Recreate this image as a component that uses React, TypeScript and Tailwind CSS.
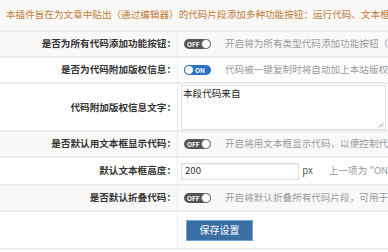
import React from 'react';

const Toggle = ({ on }: { on?: boolean }) =>
  on ? (
    <span className="relative inline-flex items-center w-[27px] h-[10px] rounded-full bg-[#2a72c4] shrink-0">
      <span className="absolute left-0 top-[-0.5px] w-[10px] h-[10px] rounded-full bg-white border border-[#2a72c4]" />
      <span className="ml-[11px] text-[6.5px] font-bold leading-none text-white">ON</span>
    </span>
  ) : (
    <span className="relative inline-flex items-center w-[27px] h-[10px] rounded-full bg-[#555] shrink-0">
      <span className="ml-[3px] text-[6.5px] font-bold leading-none text-white">OFF</span>
      <span className="absolute right-0 top-[-0.5px] w-[10px] h-[10px] rounded-full bg-white border border-[#777]" />
    </span>
  );

const Row = ({
  label,
  gray,
  h,
  children,
}: {
  label: string;
  gray?: boolean;
  h: string;
  children: React.ReactNode;
}) => (
  <div className={`grid grid-cols-[178px_1fr] border-b-2 border-[#ececec] ${gray ? 'bg-[#f9f9f9]' : 'bg-white'} ${h}`}>
    <div className="flex items-center justify-end pr-[1px] border-r border-[#ececec] font-bold text-[#333]">
      {label}
    </div>
    <div className="flex items-center pl-[6px] gap-[14px] overflow-hidden whitespace-nowrap">{children}</div>
  </div>
);

export default function App() {
  return (
    <div
      className="w-[388px] h-[252px] overflow-hidden bg-white text-[9.6px] leading-none [text-spacing-trim:space-all]"
      style={{ fontFamily: '"Noto Sans CJK SC", "Noto Sans", sans-serif' }}
    >
      <div className="h-[32px] flex items-center pl-[6px] bg-[#f9f9f9] border-b-2 border-[#ececec] text-[#c27a33] whitespace-nowrap overflow-hidden">
        本插件旨在为文章中贴出（通过编辑器）的代码片段添加多种功能按钮：运行代码、文本框
      </div>

      <Row label="是否为所有代码添加功能按钮：" gray h="h-[26px]">
        <Toggle />
        <span className="text-[#999]">开启将为所有类型代码添加功能按钮（注：非</span>
      </Row>

      <Row label="是否为代码附加版权信息：" h="h-[26px]">
        <Toggle on />
        <span className="text-[#999]">代码被一键复制时将自动加上本站版权信息</span>
      </Row>

      <div className="grid grid-cols-[178px_1fr] border-b-2 border-[#ececec] bg-white h-[48px]">
        <div className="flex items-center justify-end pr-[1px] border-r border-[#ececec] font-bold text-[#333]">
          代码附加版权信息文字：
        </div>
        <div className="pl-[3px] pr-[2px] py-[1px]">
          <div className="relative h-[45px] border border-[#ddd] px-[1px] pt-[3px] text-[#222]">
            本段代码来自
            <svg className="absolute right-[1px] bottom-[1px]" width="6" height="6" viewBox="0 0 6 6">
              <path d="M5.5 0.5 L0.5 5.5 M5.5 3 L3 5.5" stroke="#999" strokeWidth="0.8" />
            </svg>
          </div>
        </div>
      </div>

      <Row label="是否默认用文本框显示代码：" gray h="h-[26px]">
        <Toggle />
        <span className="text-[#999]">开启将用文本框显示代码，以便控制代码颜色</span>
      </Row>

      <div className="grid grid-cols-[178px_1fr] border-b-2 border-[#ececec] bg-white h-[28px]">
        <div className="flex items-center justify-end pr-[1px] border-r border-[#ececec] font-bold text-[#333]">
          默认文本框高度：
        </div>
        <div className="flex items-center pl-[3px] whitespace-nowrap overflow-hidden">
          <div className="w-[123px] h-[17px] border border-[#ddd] flex items-center pl-[3px] text-[#333] shadow-[inset_0_1px_2px_rgba(0,0,0,0.07)]">
            200
          </div>
          <span className="ml-[3px] text-[#555]">px</span>
          <span className="ml-[16px] text-[#999]">上一项为 "ON</span>
        </div>
      </div>

      <Row label="是否默认折叠代码：" gray h="h-[26px]">
        <Toggle />
        <span className="text-[#999]">开启将默认折叠所有代码片段，可用于减少文</span>
      </Row>

      <div className="grid grid-cols-[178px_1fr] border-b-2 border-[#ececec] bg-white h-[38px]">
        <div className="border-r border-[#ececec]" />
        <div className="flex items-center pl-[8px]">
          <button className="w-[67px] h-[21px] bg-[#3a6ea5] border border-[#6fa3d6] text-white text-[10px] leading-none">
            保存设置
          </button>
        </div>
      </div>
    </div>
  );
}
